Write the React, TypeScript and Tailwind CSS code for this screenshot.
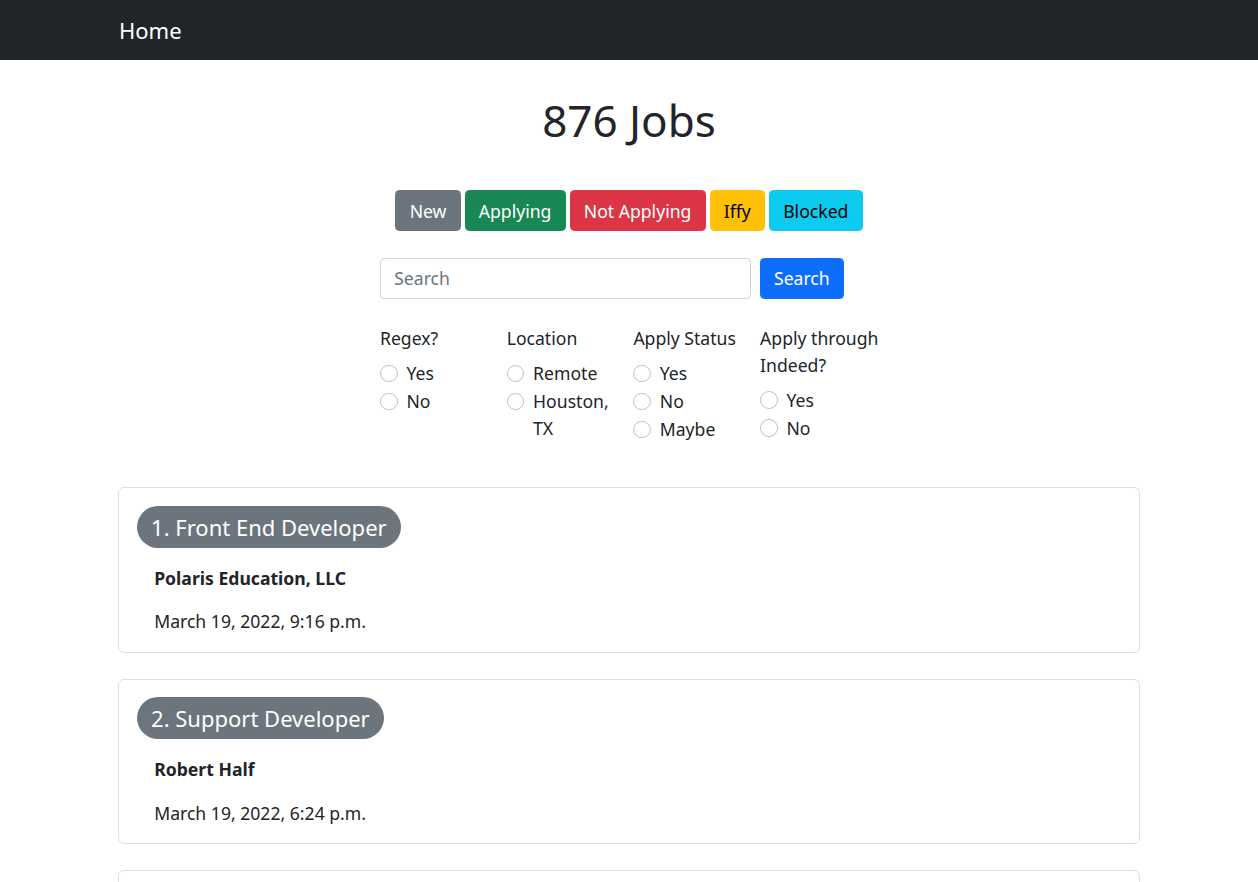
import React from "react";

const buttons = [
  { label: "New", cls: "bg-[#6c757d] border-[#6c757d] text-white" },
  { label: "Applying", cls: "bg-[#198754] border-[#198754] text-white" },
  { label: "Not Applying", cls: "bg-[#dc3545] border-[#dc3545] text-white" },
  { label: "Iffy", cls: "bg-[#ffc107] border-[#ffc107] text-black" },
  { label: "Blocked", cls: "bg-[#0dcaf0] border-[#0dcaf0] text-black" },
];

const filters: { title: React.ReactNode; options: React.ReactNode[] }[] = [
  { title: "Regex?", options: ["Yes", "No"] },
  { title: "Location", options: ["Remote", <>Houston,<br />TX</>] },
  { title: "Apply Status", options: ["Yes", "No", "Maybe"] },
  { title: <>Apply through<br />Indeed?</>, options: ["Yes", "No"] },
];

const jobs = [
  { title: "1. Front End Developer", company: "Polaris Education, LLC", date: "March 19, 2022, 9:16 p.m." },
  { title: "2. Support Developer", company: "Robert Half", date: "March 19, 2022, 6:24 p.m." },
  { title: "3. Web Developer", company: "Insight Global", date: "March 19, 2022, 4:02 p.m." },
];

export default function App() {
  return (
    <div
      className="min-h-screen bg-white text-[#212529] text-[17.6px] leading-[26.4px]"
      style={{ fontFamily: '"Noto Sans", "Open Sans", sans-serif' }}
    >
      <nav className="h-[60px] bg-[#212529] flex items-center">
        <div className="w-[1022px] mx-auto">
          <span className="ml-[1px] text-white text-[22px] leading-[33px]">Home</span>
        </div>
      </nav>

      <div className="w-[1022px] mx-auto">
        <h1 className="mt-[34px] text-center text-[44px] leading-[52.8px] font-normal">876 Jobs</h1>

        <div className="mt-[43px] flex justify-center gap-[4px]">
          {buttons.map((b) => (
            <button
              key={b.label}
              className={`border px-[13.2px] pt-[7.2px] pb-[6px] leading-[26.4px] rounded-[4.4px] ${b.cls}`}
            >
              {b.label}
            </button>
          ))}
        </div>

        <div className="mt-[26.4px] ml-[262px] flex gap-[9px]">
          <input
            placeholder="Search"
            className="w-[371px] border border-[#ced4da] rounded-[4.4px] px-[13.2px] py-[6.6px] leading-[26.4px] placeholder:text-[#6c757d] outline-none"
          />
          <button className="bg-[#0d6efd] border border-[#0d6efd] text-white px-[13px] py-[6.6px] leading-[26.4px] rounded-[4.4px]">
            Search
          </button>
        </div>

        <div className="mt-[26px] ml-[262px] flex">
          {filters.map((f, i) => (
            <div key={i} className="w-[126.7px]">
              <div className="mb-[8.4px]">{f.title}</div>
              {f.options.map((o, j) => (
                <div key={j} className="flex mb-[1.6px]">
                  <span className="mt-[4.4px] w-[17.6px] h-[17.6px] shrink-0 rounded-full border border-[#bfbfbf] bg-white" />
                  <span className="ml-[8.8px]">{o}</span>
                </div>
              ))}
            </div>
          ))}
        </div>

        <div className="mt-[43px]">
          {jobs.map((j) => (
            <div key={j.title} className="mb-[26px] border border-[#dfdfdf] rounded-[6px] px-[17.6px] pt-[17.6px] pb-[17px]">
              <span className="inline-flex items-center h-[42px] px-[14.5px] rounded-full bg-[#6c757d] text-white text-[22px]">
                {j.title}
              </span>
              <div className="pl-[17.6px] mt-[17px]">
                <div className="font-bold">{j.company}</div>
                <div className="mt-[17px]">{j.date}</div>
              </div>
            </div>
          ))}
        </div>
      </div>
    </div>
  );
}
